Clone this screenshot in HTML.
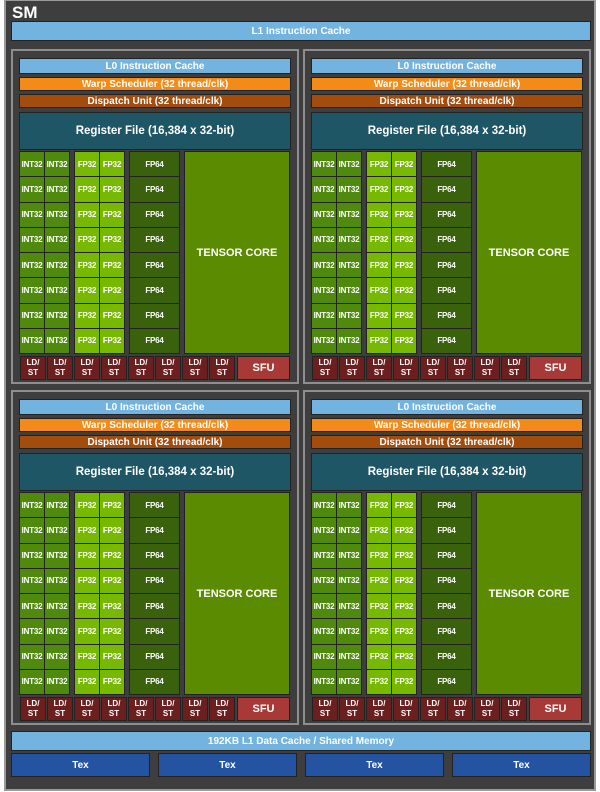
<!DOCTYPE html>
<html><head><meta charset="utf-8"><style>
*{margin:0;padding:0;box-sizing:border-box}
body{width:600px;height:792px;background:#fff;position:relative;overflow:hidden;font-family:"Liberation Sans",sans-serif;font-weight:bold;color:#fff}
.sm{position:absolute;left:4px;top:0;width:592px;height:791px;background:#3e3e3e;border:2px solid #9a9a9a;border-top:1px solid #9a9a9a}
.a{position:absolute;display:flex;align-items:center;justify-content:center;text-align:center}
.t{position:absolute;left:6px;top:2px;font-size:17px;line-height:20px}
.q{position:absolute;width:288px;height:335px;border:2px solid #8e8e8e;background:#3e3e3e}
.bar{border:1px solid #222;font-size:10px}
.blue{background:#72b3df}
.or{background:#f28b17}
.br{background:#a24d0e}
.rg{background:#1f5666;font-size:11.5px}
.blk{position:absolute;top:100px;width:51px;height:203px;border:1px solid #222;display:grid;grid-template-columns:1fr 1fr;grid-template-rows:repeat(8,1fr);gap:1px;background:#222}
.blk div{display:flex;align-items:center;justify-content:center;font-size:8px;letter-spacing:-0.2px}
.i div{background:#4f8a0e}
.f div{background:#77b900}
.d{grid-template-columns:1fr}
.d div{background:#3a620c}
.tc{top:100px;left:171px;width:106px;height:203px;background:#5b8b00;border:1px solid #222;font-size:11px}
.ld{top:305px;width:26px;height:24px;background:#6b1f1f;border:1px solid #222;font-size:8px;line-height:10px}
.sfu{top:305px;left:224px;width:53px;height:24px;background:#a73a36;border:1px solid #222;font-size:11px}
.tex{top:753px;width:139px;height:24px;background:#2453a2;border:1px solid #222;font-size:10px}
</style></head><body>
<div class="sm">
<div class="t">SM</div>
</div>
<div class="a bar blue" style="left:11px;top:21px;width:580px;height:20px">L1 Instruction Cache</div>

<!-- Q1 -->
<div class="q" style="left:11px;top:49px">
<div class="a bar blue" style="left:6px;top:7px;width:272px;height:16px">L0 Instruction Cache</div>
<div class="a bar or" style="left:6px;top:26px;width:272px;height:14px">Warp Scheduler (32 thread/clk)</div>
<div class="a bar br" style="left:6px;top:43px;width:272px;height:14px">Dispatch Unit (32 thread/clk)</div>
<div class="a bar rg" style="left:6px;top:61px;width:272px;height:38px">Register File (16,384 x 32-bit)</div>
<div class="blk i" style="left:6px"><div>INT32</div><div>INT32</div><div>INT32</div><div>INT32</div><div>INT32</div><div>INT32</div><div>INT32</div><div>INT32</div><div>INT32</div><div>INT32</div><div>INT32</div><div>INT32</div><div>INT32</div><div>INT32</div><div>INT32</div><div>INT32</div></div>
<div class="blk f" style="left:61px"><div>FP32</div><div>FP32</div><div>FP32</div><div>FP32</div><div>FP32</div><div>FP32</div><div>FP32</div><div>FP32</div><div>FP32</div><div>FP32</div><div>FP32</div><div>FP32</div><div>FP32</div><div>FP32</div><div>FP32</div><div>FP32</div></div>
<div class="blk d" style="left:116px"><div>FP64</div><div>FP64</div><div>FP64</div><div>FP64</div><div>FP64</div><div>FP64</div><div>FP64</div><div>FP64</div></div>
<div class="a tc">TENSOR CORE</div>
<div class="a ld" style="left:7px">LD/<br>ST</div><div class="a ld" style="left:34px">LD/<br>ST</div><div class="a ld" style="left:61px">LD/<br>ST</div><div class="a ld" style="left:88px">LD/<br>ST</div><div class="a ld" style="left:115px">LD/<br>ST</div><div class="a ld" style="left:142px">LD/<br>ST</div><div class="a ld" style="left:169px">LD/<br>ST</div><div class="a ld" style="left:196px">LD/<br>ST</div>
<div class="a sfu">SFU</div>
</div>

<!-- Q2 -->
<div class="q" style="left:303px;top:49px">
<div class="a bar blue" style="left:6px;top:7px;width:272px;height:16px">L0 Instruction Cache</div>
<div class="a bar or" style="left:6px;top:26px;width:272px;height:14px">Warp Scheduler (32 thread/clk)</div>
<div class="a bar br" style="left:6px;top:43px;width:272px;height:14px">Dispatch Unit (32 thread/clk)</div>
<div class="a bar rg" style="left:6px;top:61px;width:272px;height:38px">Register File (16,384 x 32-bit)</div>
<div class="blk i" style="left:6px"><div>INT32</div><div>INT32</div><div>INT32</div><div>INT32</div><div>INT32</div><div>INT32</div><div>INT32</div><div>INT32</div><div>INT32</div><div>INT32</div><div>INT32</div><div>INT32</div><div>INT32</div><div>INT32</div><div>INT32</div><div>INT32</div></div>
<div class="blk f" style="left:61px"><div>FP32</div><div>FP32</div><div>FP32</div><div>FP32</div><div>FP32</div><div>FP32</div><div>FP32</div><div>FP32</div><div>FP32</div><div>FP32</div><div>FP32</div><div>FP32</div><div>FP32</div><div>FP32</div><div>FP32</div><div>FP32</div></div>
<div class="blk d" style="left:116px"><div>FP64</div><div>FP64</div><div>FP64</div><div>FP64</div><div>FP64</div><div>FP64</div><div>FP64</div><div>FP64</div></div>
<div class="a tc">TENSOR CORE</div>
<div class="a ld" style="left:7px">LD/<br>ST</div><div class="a ld" style="left:34px">LD/<br>ST</div><div class="a ld" style="left:61px">LD/<br>ST</div><div class="a ld" style="left:88px">LD/<br>ST</div><div class="a ld" style="left:115px">LD/<br>ST</div><div class="a ld" style="left:142px">LD/<br>ST</div><div class="a ld" style="left:169px">LD/<br>ST</div><div class="a ld" style="left:196px">LD/<br>ST</div>
<div class="a sfu">SFU</div>
</div>

<!-- Q3 -->
<div class="q" style="left:11px;top:390px">
<div class="a bar blue" style="left:6px;top:7px;width:272px;height:16px">L0 Instruction Cache</div>
<div class="a bar or" style="left:6px;top:26px;width:272px;height:14px">Warp Scheduler (32 thread/clk)</div>
<div class="a bar br" style="left:6px;top:43px;width:272px;height:14px">Dispatch Unit (32 thread/clk)</div>
<div class="a bar rg" style="left:6px;top:61px;width:272px;height:38px">Register File (16,384 x 32-bit)</div>
<div class="blk i" style="left:6px"><div>INT32</div><div>INT32</div><div>INT32</div><div>INT32</div><div>INT32</div><div>INT32</div><div>INT32</div><div>INT32</div><div>INT32</div><div>INT32</div><div>INT32</div><div>INT32</div><div>INT32</div><div>INT32</div><div>INT32</div><div>INT32</div></div>
<div class="blk f" style="left:61px"><div>FP32</div><div>FP32</div><div>FP32</div><div>FP32</div><div>FP32</div><div>FP32</div><div>FP32</div><div>FP32</div><div>FP32</div><div>FP32</div><div>FP32</div><div>FP32</div><div>FP32</div><div>FP32</div><div>FP32</div><div>FP32</div></div>
<div class="blk d" style="left:116px"><div>FP64</div><div>FP64</div><div>FP64</div><div>FP64</div><div>FP64</div><div>FP64</div><div>FP64</div><div>FP64</div></div>
<div class="a tc">TENSOR CORE</div>
<div class="a ld" style="left:7px">LD/<br>ST</div><div class="a ld" style="left:34px">LD/<br>ST</div><div class="a ld" style="left:61px">LD/<br>ST</div><div class="a ld" style="left:88px">LD/<br>ST</div><div class="a ld" style="left:115px">LD/<br>ST</div><div class="a ld" style="left:142px">LD/<br>ST</div><div class="a ld" style="left:169px">LD/<br>ST</div><div class="a ld" style="left:196px">LD/<br>ST</div>
<div class="a sfu">SFU</div>
</div>

<!-- Q4 -->
<div class="q" style="left:303px;top:390px">
<div class="a bar blue" style="left:6px;top:7px;width:272px;height:16px">L0 Instruction Cache</div>
<div class="a bar or" style="left:6px;top:26px;width:272px;height:14px">Warp Scheduler (32 thread/clk)</div>
<div class="a bar br" style="left:6px;top:43px;width:272px;height:14px">Dispatch Unit (32 thread/clk)</div>
<div class="a bar rg" style="left:6px;top:61px;width:272px;height:38px">Register File (16,384 x 32-bit)</div>
<div class="blk i" style="left:6px"><div>INT32</div><div>INT32</div><div>INT32</div><div>INT32</div><div>INT32</div><div>INT32</div><div>INT32</div><div>INT32</div><div>INT32</div><div>INT32</div><div>INT32</div><div>INT32</div><div>INT32</div><div>INT32</div><div>INT32</div><div>INT32</div></div>
<div class="blk f" style="left:61px"><div>FP32</div><div>FP32</div><div>FP32</div><div>FP32</div><div>FP32</div><div>FP32</div><div>FP32</div><div>FP32</div><div>FP32</div><div>FP32</div><div>FP32</div><div>FP32</div><div>FP32</div><div>FP32</div><div>FP32</div><div>FP32</div></div>
<div class="blk d" style="left:116px"><div>FP64</div><div>FP64</div><div>FP64</div><div>FP64</div><div>FP64</div><div>FP64</div><div>FP64</div><div>FP64</div></div>
<div class="a tc">TENSOR CORE</div>
<div class="a ld" style="left:7px">LD/<br>ST</div><div class="a ld" style="left:34px">LD/<br>ST</div><div class="a ld" style="left:61px">LD/<br>ST</div><div class="a ld" style="left:88px">LD/<br>ST</div><div class="a ld" style="left:115px">LD/<br>ST</div><div class="a ld" style="left:142px">LD/<br>ST</div><div class="a ld" style="left:169px">LD/<br>ST</div><div class="a ld" style="left:196px">LD/<br>ST</div>
<div class="a sfu">SFU</div>
</div>

<div class="a bar blue" style="left:11px;top:731px;width:580px;height:20px">192KB L1 Data Cache / Shared Memory</div>
<div class="a tex" style="left:11px">Tex</div>
<div class="a tex" style="left:158px">Tex</div>
<div class="a tex" style="left:305px">Tex</div>
<div class="a tex" style="left:452px">Tex</div>
</body></html>
